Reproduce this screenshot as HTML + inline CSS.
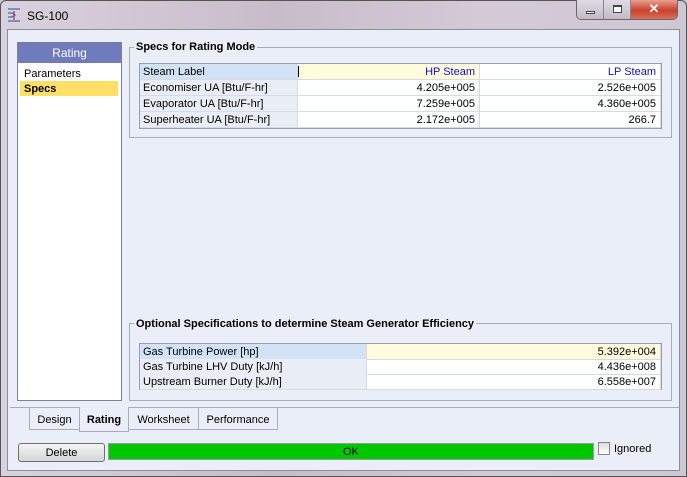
<!DOCTYPE html>
<html><head><style>
*{margin:0;padding:0;box-sizing:border-box}
body{width:687px;height:477px;overflow:hidden;font-family:"Liberation Sans",sans-serif;font-size:11px;color:#000;background:#cfc6d3;position:relative}
.a{position:absolute}
.frame{left:0;top:0;width:687px;height:477px;border:1px solid #555;border-radius:6px 6px 0 0;background:linear-gradient(90deg,#d9d2de,#c9bcc9 40%,#d3cad6 70%,#cfc8d4)}
.client{left:7px;top:29px;width:673px;height:442px;background:#e9eef8;border:1px solid #8a8f9a}
.g{border:1px solid #a9adb5}
.gt{background:#e9eef8;font-weight:bold;padding:0 2px;font-size:11px}
.tbl{background:#fff;border:1px solid #9aa0aa}
.c{position:absolute;height:16px;line-height:17px;border-right:1px solid #d6dbe3;border-bottom:1px solid #d6dbe3;white-space:nowrap;padding:0 3px}
.l{background:#e8edf6}
.r{text-align:right;padding-right:4px}
.tab{position:absolute;top:408px;height:22px;border:1px solid #a9adb5;border-top:none;line-height:24px;text-align:center;background:#e9eef8}
</style></head><body>
<div class="a frame"></div>
<svg class="a" style="left:6px;top:7px" width="16" height="16"><g stroke="#3a6cc0" stroke-width="1.3" fill="none"><path d="M2 2h12M2 6h4l3 2-3 2H2M2 14h12"/><path d="M8 4v9" stroke="#c33"/></g></svg>
<div class="a" style="left:27px;top:9px;font-size:12px">SG-100</div>
<div class="a" style="left:576px;top:0;width:102px;height:20px;border:1px solid #6d6670;border-top:none;border-radius:0 0 5px 5px;overflow:hidden;display:flex">
<div style="width:27px;background:linear-gradient(#e0dbe3,#c2bbc6);border-right:1px solid #8d8690;position:relative"><div class="a" style="left:9px;top:11px;width:9px;height:3px;border:1px solid #444;background:#fff"></div></div>
<div style="width:27px;background:linear-gradient(#e0dbe3,#c2bbc6);border-right:1px solid #8d8690;position:relative"><div class="a" style="left:9px;top:5px;width:9px;height:8px;border:1px solid #444;border-top-width:2px;background:#fff"></div></div>
<div style="flex:1;background:linear-gradient(#e8a090,#c9412b 55%,#d8705a);color:#fff;font-weight:bold;text-align:center;font-size:13px;line-height:18px">✕</div></div>
<div class="a client"></div>
<div class="a" style="left:17px;top:42px;width:105px;height:359px;background:#fff;border:1px solid #7d828c"></div>
<div class="a" style="left:18px;top:43px;width:103px;height:20px;background:#6f7bbd;color:#fff;text-align:center;line-height:21px;font-size:12px">Rating</div>
<div class="a" style="left:24px;top:68px">Parameters</div>
<div class="a" style="left:20px;top:81px;width:98px;height:15px;background:#ffe066"></div>
<div class="a" style="left:24px;top:83px;font-weight:bold">Specs</div>
<div class="a g" style="left:129px;top:47px;width:543px;height:91px"></div>
<div class="a gt" style="left:134px;top:41px">Specs for Rating Mode</div>
<div class="a tbl" style="left:139px;top:63px;width:523px;height:66px">
<div class="c l" style="left:0;top:0;width:158px;background:#d3e3f6">Steam Label</div>
<div class="c r" style="left:158px;top:0;width:182px;background:#fffbdc;color:#1010c8">HP Steam</div>
<div class="c r" style="left:340px;top:0;width:181px;color:#1010c8">LP Steam</div>
<div class="c l" style="left:0;top:16px;width:158px">Economiser UA [Btu/F-hr]</div>
<div class="c r" style="left:158px;top:16px;width:182px">4.205e+005</div>
<div class="c r" style="left:340px;top:16px;width:181px">2.526e+005</div>
<div class="c l" style="left:0;top:32px;width:158px">Evaporator UA [Btu/F-hr]</div>
<div class="c r" style="left:158px;top:32px;width:182px">7.259e+005</div>
<div class="c r" style="left:340px;top:32px;width:181px">4.360e+005</div>
<div class="c l" style="left:0;top:48px;width:158px">Superheater UA [Btu/F-hr]</div>
<div class="c r" style="left:158px;top:48px;width:182px">2.172e+005</div>
<div class="c r" style="left:340px;top:48px;width:181px">266.7</div>
</div>
<div class="a" style="left:298px;top:66px;width:1px;height:11px;background:#000"></div>
<div class="a g" style="left:129px;top:323px;width:543px;height:78px"></div>
<div class="a gt" style="left:134px;top:318px">Optional Specifications to determine Steam Generator Efficiency</div>
<div class="a tbl" style="left:139px;top:343px;width:523px;height:47px">
<div class="c l" style="left:0;top:0;width:227px;background:#d3e3f6">Gas Turbine Power [hp]</div>
<div class="c r" style="left:227px;top:0;width:294px;background:#fffbdc">5.392e+004</div>
<div class="c l" style="left:0;top:15px;width:227px">Gas Turbine LHV Duty [kJ/h]</div>
<div class="c r" style="left:227px;top:15px;width:294px">4.436e+008</div>
<div class="c l" style="left:0;top:30px;width:227px">Upstream Burner Duty [kJ/h]</div>
<div class="c r" style="left:227px;top:30px;width:294px">6.558e+007</div>
</div>
<div class="a" style="left:10px;top:407px;width:669px;height:1px;background:#a9adb5"></div>
<div class="tab" style="left:29px;width:51px">Design</div>
<div class="tab" style="left:79px;width:50px;height:25px;top:407px;font-weight:bold;line-height:26px">Rating</div>
<div class="tab" style="left:128px;width:71px">Worksheet</div>
<div class="tab" style="left:198px;width:80px">Performance</div>
<div class="a" style="left:18px;top:443px;width:87px;height:19px;border:1px solid #707070;border-radius:3px;background:linear-gradient(#f4f4f4,#d5d5d5);text-align:center;line-height:19px">Delete</div>
<div class="a" style="left:108px;top:443px;width:486px;height:17px;background:#00c800;border:1px solid #999;text-align:center;line-height:17px">OK</div>
<div class="a" style="left:598px;top:442px;width:12px;height:13px;border:1px solid #888;background:linear-gradient(#ddd,#fff)"></div>
<div class="a" style="left:614px;top:443px">Ignored</div>
</body></html>
